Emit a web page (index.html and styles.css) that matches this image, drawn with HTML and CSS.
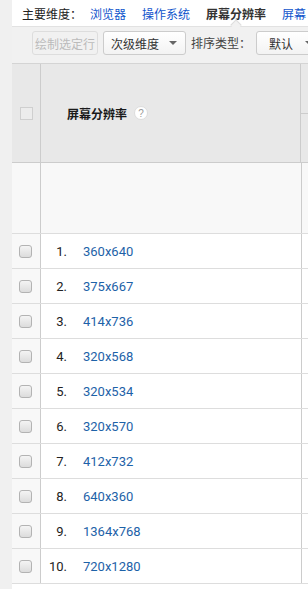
FILE: index.html
```html
<!DOCTYPE html>
<html lang="zh-CN">
<head>
    <meta charset="UTF-8">
    <title>屏幕分辨率</title>
    <link rel="stylesheet" href="styles.css">
</head>
<body>
    <div class="side-strip"></div>
    <div class="report">
        <div class="dim-bar">
            <span class="dim-label">主要维度：</span>
            <a class="dim-link">浏览器</a>
            <a class="dim-link">操作系统</a>
            <span class="dim-current">屏幕分辨率</span>
            <a class="dim-link">屏幕</a>
        </div>
        <div class="toolbar">
            <button class="btn" disabled>绘制选定行</button>
            <button class="btn btn-drop">次级维度 <span class="caret"></span></button>
            <span class="tool-label">排序类型：</span>
            <button class="btn btn-drop btn-wide">默认 <span class="caret"></span></button>
        </div>
        <div class="table">
            <div class="row head-row">
                <div class="cell-check"><span class="head-box"></span></div>
                <div class="cell-dim head-title">屏幕分辨率 <span class="help">?</span></div>
                <div class="cell-rest head-split">
                    <div class="split-top"></div>
                    <div class="split-bottom"></div>
                </div>
            </div>
            <div class="row total-row">
                <div class="cell-check"></div>
                <div class="cell-dim"></div>
                <div class="cell-rest"></div>
            </div>
            <div id="rows"></div>
        </div>
    </div>
<script>
    const data = ["360x640", "375x667", "414x736", "320x568", "320x534",
        "320x570", "412x732", "640x360", "1364x768", "720x1280"];
    const rows = document.getElementById("rows");
    data.forEach(function (res, i) {
        const row = document.createElement("div");
        row.className = "row data-row";
        row.innerHTML =
            '<div class="cell-check"><span class="box"></span></div>' +
            '<div class="cell-dim"><span class="num">' + (i + 1) + '.</span>' +
            '<a class="res-link">' + res + '</a></div>' +
            '<div class="cell-rest"></div>';
        rows.appendChild(row);
    });
</script>
</body>
</html>
```
FILE: styles.css
```css
body {
    margin: 0;
    padding: 0;
    display: flex;
    height: 100vh;
    overflow: hidden;
    font-family: "Noto Sans CJK SC", "Liberation Sans", sans-serif;
    font-size: 12px;
    color: #222;
    background-color: #fff;
}

.side-strip {
    width: 12px;
    flex-shrink: 0;
    background-color: #f0f0f0;
}

.report {
    flex-grow: 1;
    overflow: hidden;
    white-space: nowrap;
}

.dim-bar {
    height: 26px;
    display: flex;
    align-items: center;
    padding-left: 10px;
    gap: 16px;
}

.dim-label {
    margin-right: -8px;
    color: #222;
}

.dim-link {
    color: #1155cc;
}

.dim-current {
    font-weight: bold;
    color: #333;
    position: relative;
}

.dim-current::after {
    content: "";
    position: absolute;
    left: 26px;
    bottom: -7px;
    width: 7px;
    height: 7px;
    background-color: #f1f1f1;
    border-left: 1px solid #ddd;
    border-top: 1px solid #ddd;
    transform: rotate(45deg);
}

.toolbar {
    height: 37px;
    display: flex;
    align-items: flex-start;
    gap: 5px;
    padding-top: 4px;
    padding-left: 20px;
    box-sizing: border-box;
    background-color: #f1f1f1;
    border-top: 1px solid #e2e2e2;
}

.btn {
    height: 24px;
    padding: 0 2px;
    font-family: inherit;
    font-size: 12px;
    color: #333;
    border: 1px solid #ccc;
    border-radius: 3px;
    background: linear-gradient(#fff, #f3f3f3);
    display: flex;
    align-items: center;
}

.btn:disabled {
    color: #bbb;
    border-color: #ddd;
    background: #f1f1f1;
}

.btn-drop {
    padding: 0 8px 0 7px;
    gap: 10px;
}

.btn-wide {
    padding: 0 12px;
    gap: 12px;
}

.caret {
    width: 0;
    height: 0;
    border-left: 4px solid transparent;
    border-right: 4px solid transparent;
    border-top: 4px solid #666;
}

.tool-label {
    line-height: 24px;
    color: #444;
}

.table {
    border-top: 1px solid #d4d4d4;
}

.row {
    display: flex;
}

.cell-check {
    width: 28px;
    flex-shrink: 0;
    border-right: 1px solid #ccc;
    display: flex;
    align-items: center;
}

.cell-dim {
    width: 260px;
    flex-shrink: 0;
    border-right: 1px solid #ccc;
    display: flex;
    align-items: center;
}

.cell-rest {
    flex-grow: 1;
}

.head-row {
    height: 98px;
    background-color: #e8e8e8;
    border-bottom: 1px solid #ccc;
}

.head-box {
    width: 11px;
    height: 11px;
    margin-left: 8px;
    border: 1px solid #cfcfcf;
    background-color: #ececec;
}

.head-title {
    padding-left: 26px;
    box-sizing: border-box;
    font-weight: bold;
    color: #1a1a1a;
    gap: 7px;
}

.help {
    width: 14px;
    height: 14px;
    border-radius: 50%;
    background-color: #fff;
    border: 1px solid #ddd;
    box-sizing: border-box;
    color: #999;
    font-family: "Liberation Sans", sans-serif;
    font-size: 10px;
    font-weight: normal;
    display: flex;
    align-items: center;
    justify-content: center;
}

.head-split {
    display: flex;
    flex-direction: column;
}

.split-top {
    height: 49px;
    border-bottom: 1px solid #ccc;
}

.total-row {
    height: 70px;
    background-color: #f8f8f8;
    border-bottom: 1px solid #ddd;
}

.data-row {
    height: 34px;
    border-bottom: 1px solid #ddd;
}

.data-row .cell-check {
    background-color: #f8f8f8;
}

.box {
    width: 11px;
    height: 11px;
    margin-left: 7px;
    border: 1px solid #b3b3b3;
    border-radius: 3px;
    background: linear-gradient(#f4f4f4, #dcdcdc);
}

.num {
    width: 26px;
    text-align: right;
    font-family: Roboto, "Liberation Sans", sans-serif;
    font-size: 13px;
    color: #222;
}

.res-link {
    margin-left: 16px;
    font-family: Roboto, "Liberation Sans", sans-serif;
    font-size: 13px;
    color: #1d62a8;
}
```
